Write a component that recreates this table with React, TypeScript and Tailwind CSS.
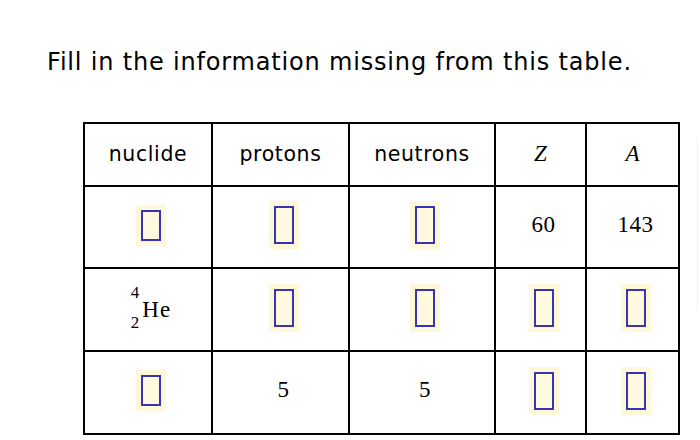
import React from 'react';

const sans = "font-['DejaVu_Sans',_Verdana,_sans-serif]";
const serif = "font-['Liberation_Serif',_'Times_New_Roman',_serif]";

// empty answer slot: blue outline on a pale yellow pad
function Blank({ tall = true }: { tall?: boolean }) {
  return (
    <span className="inline-flex p-[5px] bg-[#fff7d9]">
      <span className={`block w-[20px] border-2 border-[#3535b5] bg-[#fff9df] ${tall ? 'h-[38px]' : 'h-[31px]'}`} />
    </span>
  );
}

function Helium() {
  return (
    <span className={`inline-flex items-center ${serif} text-black`}>
      <span className="flex flex-col items-end text-[17px] leading-[16px] gap-[14px] mr-[3px]">
        <span>4</span>
        <span>2</span>
      </span>
      <span className="text-[23px] leading-none tracking-[1px] mt-[4px]">He</span>
    </span>
  );
}

const cols = ['w-[128px]', 'w-[137px]', 'w-[146px]', 'w-[91px]', 'w-[93px]'];

type Cell = React.ReactNode;

function Row({ cells, h, head = false }: { cells: Cell[]; h: string; head?: boolean }) {
  return (
    <div className="flex">
      {cells.map((c, i) => (
        <div
          key={i}
          className={`${cols[i]} ${h} border-r-2 border-b-2 border-black flex items-center justify-center ${
            head ? '' : 'pl-[6px] pb-[4px]'
          }`}
        >
          {c}
        </div>
      ))}
    </div>
  );
}

export default function App() {
  const th = `${sans} text-[20.5px] tracking-[0.6px] text-black`;
  const num = `${serif} text-[23px] tracking-[0.5px] text-black`;
  const ital = `${serif} italic text-[23px] text-black`;

  return (
    <div className="w-[700px] h-[440px] bg-white overflow-hidden">
      <h1 className={`${sans} text-[24px] leading-none tracking-[0.82px] text-black font-normal pt-[50px] pl-[47px]`}>
        Fill in the information missing from this table.
      </h1>

      <div className="flex mt-[48px]">
        <div className="ml-[83px] border-l-2 border-t-2 border-black">
          <Row
            head
            h="h-[63px]"
            cells={[
              <span className={th}>nuclide</span>,
              <span className={th}>protons</span>,
              <span className={th}>neutrons</span>,
              <span className={ital}>Z</span>,
              <span className={ital}>A</span>,
            ]}
          />
          <Row
            h="h-[82px]"
            cells={[
              <Blank tall={false} />,
              <Blank />,
              <Blank />,
              <span className={num}>60</span>,
              <span className={num}>143</span>,
            ]}
          />
          <Row h="h-[83px]" cells={[<Helium />, <Blank />, <Blank />, <Blank />, <Blank />]} />
          <Row
            h="h-[83px]"
            cells={[
              <Blank tall={false} />,
              <span className={num}>5</span>,
              <span className={num}>5</span>,
              <Blank />,
              <Blank />,
            ]}
          />
        </div>
        <div className="ml-[17px] mt-[16px] w-px h-[172px] bg-[#f3f3f3]" />
      </div>
    </div>
  );
}
